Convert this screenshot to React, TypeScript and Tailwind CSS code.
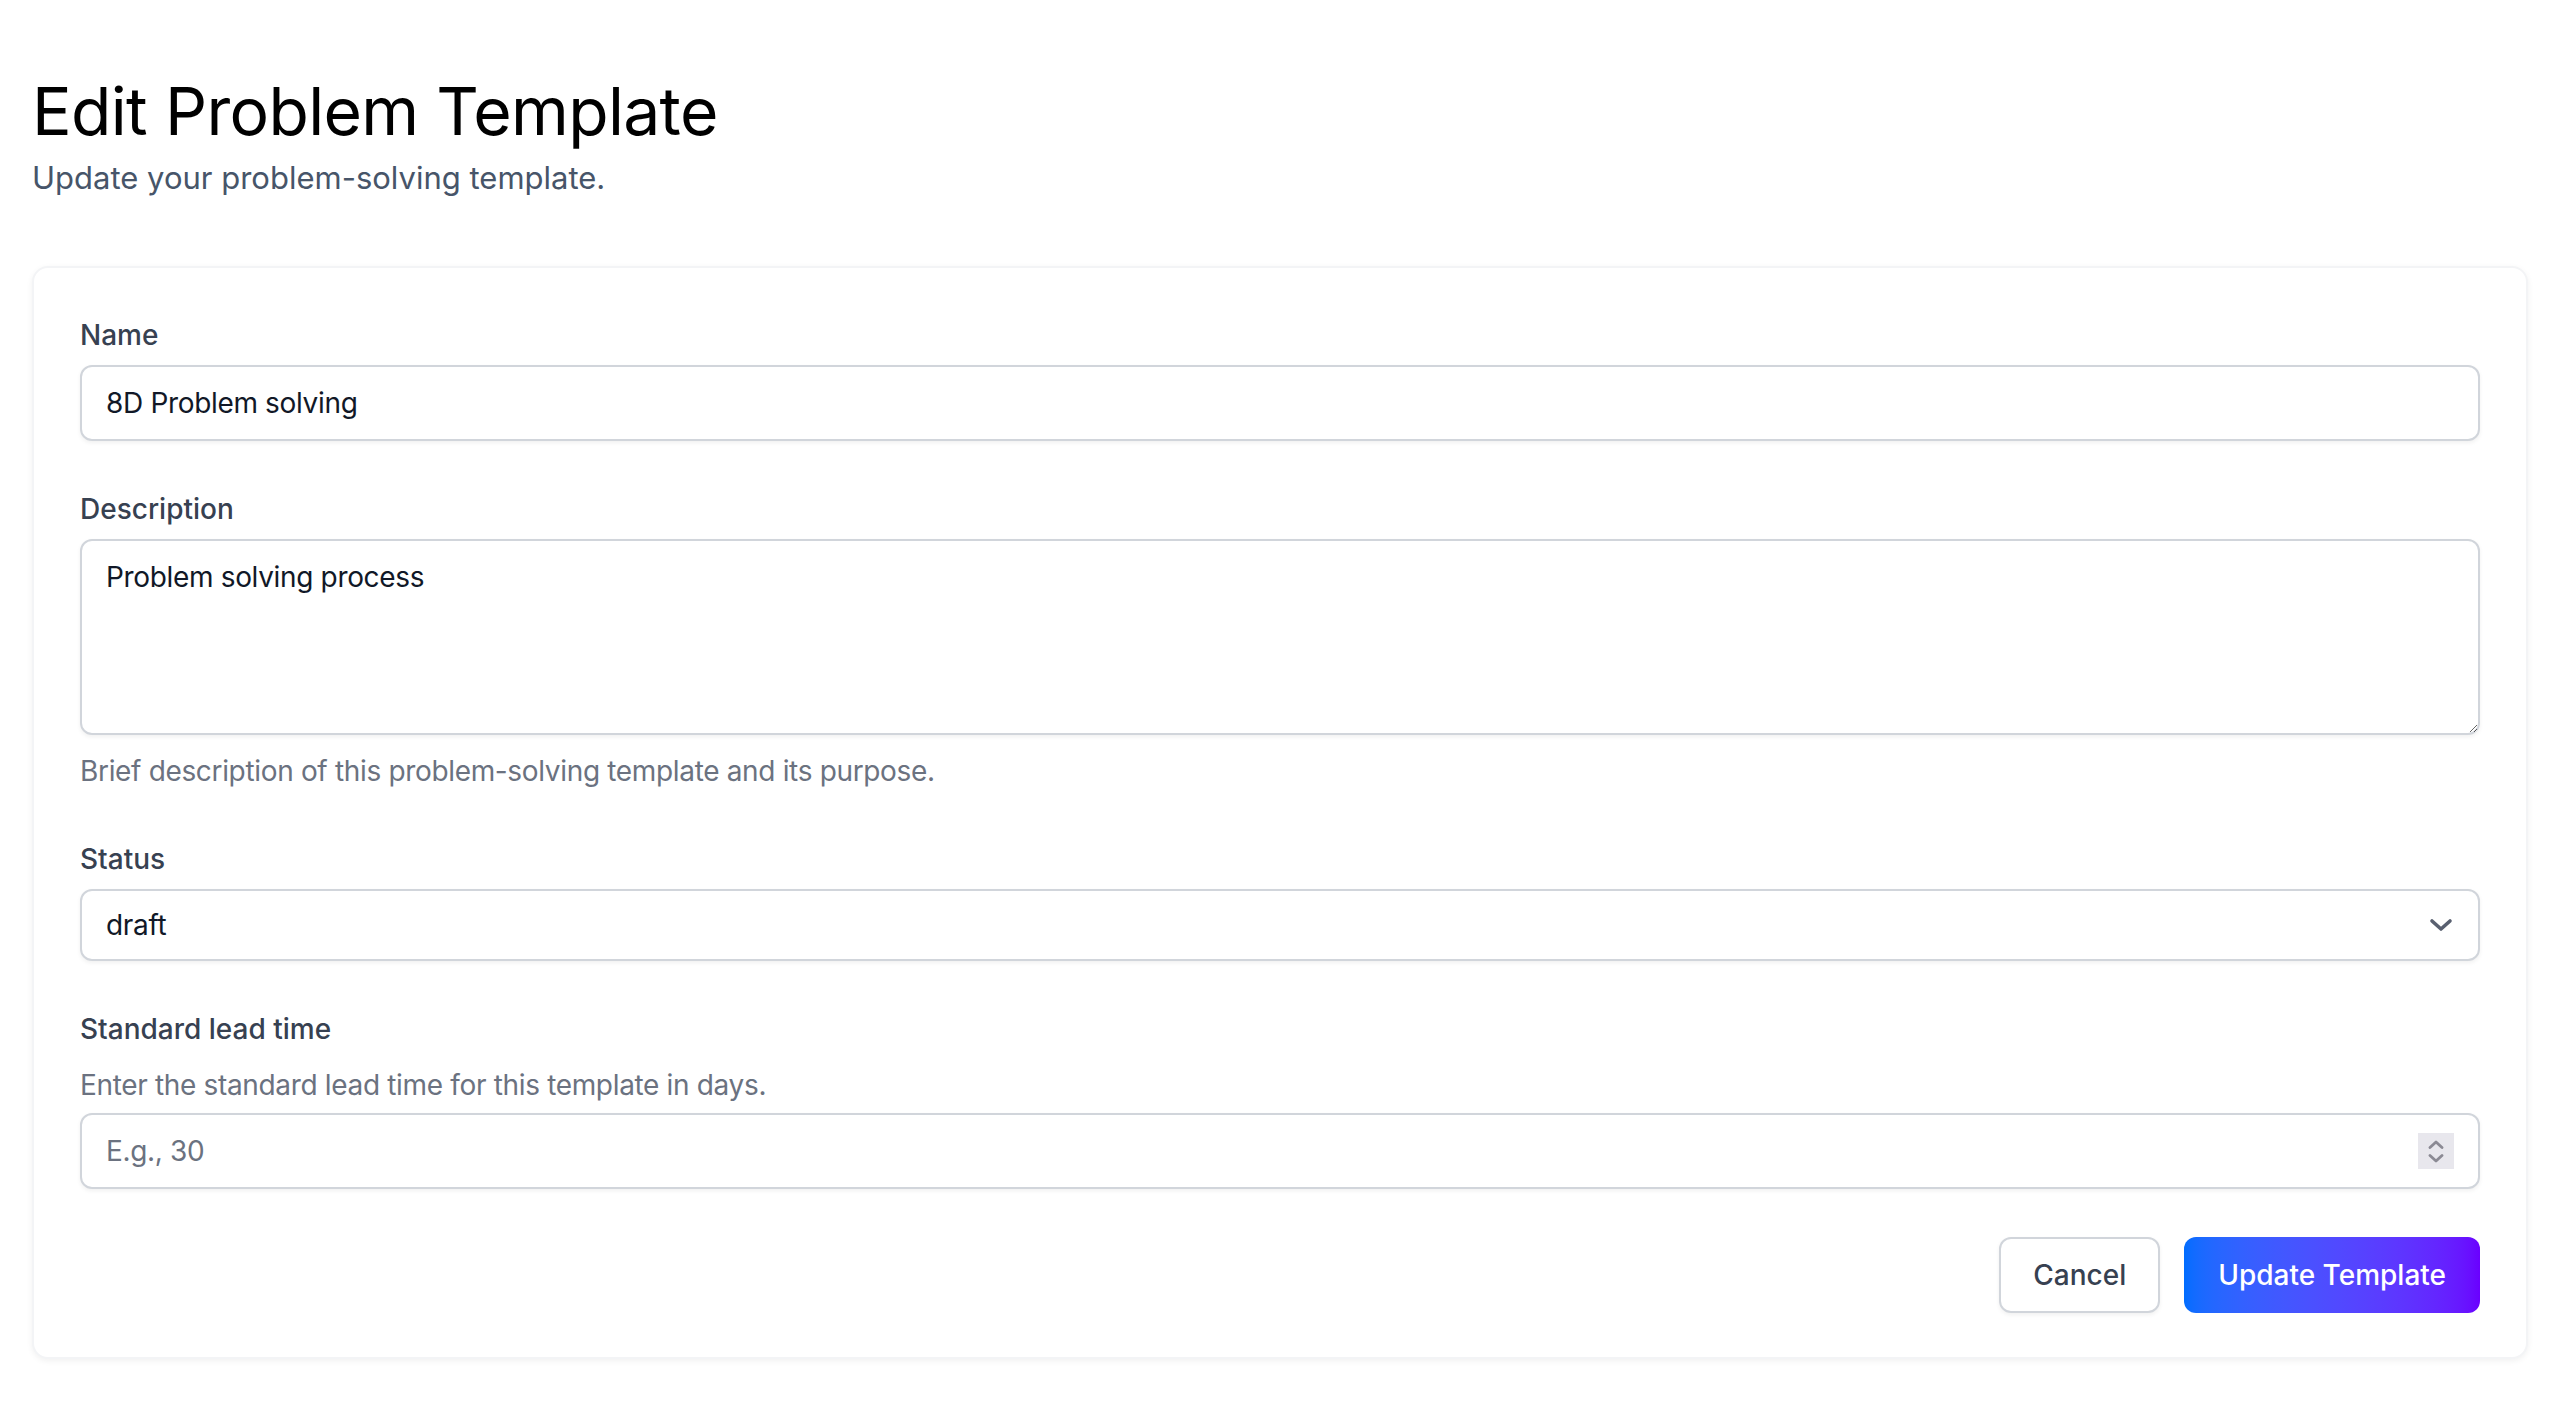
import { useState } from "react";

const inputBase =
  "w-full rounded-[12px] border-2 border-[#d1d5db] bg-white px-[24px] text-[28px] leading-[40px] tracking-[-0.012em] text-[#111827] shadow-[0_2px_4px_rgba(0,0,0,0.06)] outline-none placeholder:text-[#6b7280]";

function Label({ children }: { children: React.ReactNode }) {
  return <label className="block text-[28px] leading-[40px] font-medium text-[#374151]">{children}</label>;
}

function Hint({ children, className = "" }: { children: React.ReactNode; className?: string }) {
  return <p className={`text-[28px] leading-[40px] tracking-[-0.012em] text-[#6b7280] ${className}`}>{children}</p>;
}

export default function App() {
  const [name, setName] = useState("8D Problem solving");
  const [description, setDescription] = useState("Problem solving process");
  const [status, setStatus] = useState("draft");
  const [leadTime, setLeadTime] = useState("");

  return (
    <div className="min-h-screen bg-white px-[32px] pt-[71px] pb-[64px]" style={{ fontFamily: "Inter, 'Noto Sans', sans-serif" }}>
      <h1 className="text-[66px] leading-[80px] font-normal tracking-[-0.01em] text-black">Edit Problem Template</h1>
      <p className="mt-[3px] text-[31px] leading-[48px] text-[#475569]">Update your problem-solving template.</p>

      <form
        className="mt-[64px] rounded-[16px] border-2 border-[#f3f4f6] bg-white px-[46px] pt-[47px] pb-[44px] shadow-[0_2px_6px_rgba(0,0,0,0.06)]"
        onSubmit={(e) => e.preventDefault()}
      >
        <div className="flex flex-col gap-[48px]">
          <div>
            <Label>Name</Label>
            <input
              className={`${inputBase} mt-[10px] py-[16px]`}
              value={name}
              onChange={(e) => setName(e.target.value)}
            />
          </div>

          <div>
            <Label>Description</Label>
            <textarea
              rows={4}
              className={`${inputBase} mt-[10px] block py-[16px]`}
              value={description}
              onChange={(e) => setDescription(e.target.value)}
            />
            <Hint className="mt-[16px]">Brief description of this problem-solving template and its purpose.</Hint>
          </div>

          <div>
            <Label>Status</Label>
            <div className="relative mt-[10px]">
              <select
                className={`${inputBase} h-[72px] appearance-none pr-[72px]`}
                value={status}
                onChange={(e) => setStatus(e.target.value)}
              >
                <option value="draft">draft</option>
                <option value="active">active</option>
                <option value="archived">archived</option>
              </select>
              <svg
                className="pointer-events-none absolute right-[27px] top-1/2 -translate-y-1/2"
                width="24"
                height="14"
                viewBox="0 0 24 14"
                fill="none"
                stroke="#596070"
                strokeWidth="3.6"
                strokeLinecap="round"
                strokeLinejoin="round"
              >
                <path d="M3 3l9 8 9-8" />
              </svg>
            </div>
          </div>

          <div>
            <Label>Standard lead time</Label>
            <Hint className="mt-[16px]">Enter the standard lead time for this template in days.</Hint>
            <div className="relative mt-[8px]">
              <input
                type="text"
                inputMode="numeric"
                placeholder="E.g., 30"
                className={`${inputBase} py-[16px] pr-[80px]`}
                value={leadTime}
                onChange={(e) => setLeadTime(e.target.value.replace(/[^0-9]/g, ""))}
              />
              <div className="pointer-events-none absolute right-[26px] top-1/2 flex h-[36px] w-[36px] -translate-y-1/2 flex-col items-center justify-center gap-[5px] bg-[#e8e7ed]">
                <svg width="16" height="9" viewBox="0 0 16 9" fill="none" stroke="#8b8a94" strokeWidth="2.8" strokeLinecap="round" strokeLinejoin="round">
                  <path d="M2 7.5l6-5.5 6 5.5" />
                </svg>
                <svg width="16" height="9" viewBox="0 0 16 9" fill="none" stroke="#8b8a94" strokeWidth="2.8" strokeLinecap="round" strokeLinejoin="round">
                  <path d="M2 1.5l6 5.5 6-5.5" />
                </svg>
              </div>
            </div>
          </div>

          <div className="flex justify-end gap-[24px]">
            <button
              type="button"
              className="h-[76px] rounded-[12px] border-2 border-[#d1d5db] bg-white px-[32px] text-[28px] font-medium text-[#374151] shadow-[0_2px_4px_rgba(0,0,0,0.06)]"
            >
              Cancel
            </button>
            <button
              type="submit"
              className="h-[76px] rounded-[12px] bg-gradient-to-r from-[#006dff] to-[#6a00ff] px-[34px] text-[28px] font-medium text-white"
            >
              Update Template
            </button>
          </div>
        </div>
      </form>
    </div>
  );
}
